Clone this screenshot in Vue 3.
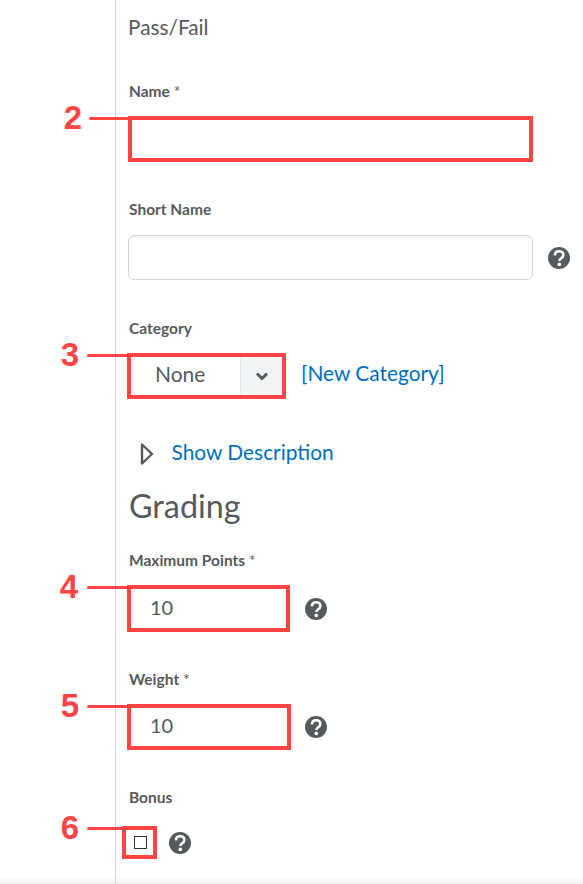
<script setup>
// question mark icon is the same everywhere, so it is drawn once and re-used with <use>
const helpIcon = '#help-icon'
</script>

<template>
  <div class="page">
    <svg class="icon-defs" width="0" height="0">
      <symbol id="help-icon" viewBox="0 0 22 22">
        <circle cx="11" cy="11" r="11" fill="#565a5c" />
        <path d="M6.9 8.4C7 5.9 8.7 4.3 11.1 4.3c2.5 0 4.2 1.5 4.2 3.7 0 1.7-.9 2.6-2.2 3.4-1.1.7-1.7 1.3-1.7 2.6" fill="none" stroke="#fff" stroke-width="2.6" />
        <circle cx="11.3" cy="17.4" r="1.8" fill="#fff" />
      </symbol>
    </svg>

    <div class="bottom-shade"></div>

    <main class="content">
      <p class="type-name">Pass/Fail</p>

      <div class="field">
        <label class="label label-name">Name <span class="req">*</span></label>
        <div class="marked">
          <input class="box box-name" type="text">
          <div class="callout callout-tight"><span class="num">2</span><span class="line line-name"></span></div>
        </div>
      </div>

      <div class="field field-short">
        <label class="label label-short">Short Name</label>
        <div class="row">
          <input class="short-input" type="text">
          <svg class="help" width="22" height="22"><use :href="helpIcon" /></svg>
        </div>
      </div>

      <div class="field field-category">
        <label class="label">Category</label>
        <div class="row row-category">
          <div class="marked">
            <div class="box box-select">
              <span class="select-value">None</span>
              <span class="select-arrow">
                <svg width="14" height="10" viewBox="0 0 14 10">
                  <path d="M2 2.5l5 5 5-5" fill="none" stroke="#565a5c" stroke-width="3" />
                </svg>
              </span>
            </div>
            <div class="callout"><span class="num">3</span><span class="line"></span></div>
          </div>
          <a class="link new-category">[New Category]</a>
        </div>
      </div>

      <div class="show-desc">
        <svg class="show-arrow" width="14" height="22" viewBox="0 0 14 22">
          <path d="M2 1.5v19L12 11z" fill="none" stroke="#565a5c" stroke-width="2.4" stroke-linejoin="round" />
        </svg>
        <a class="link">Show Description</a>
      </div>

      <h2 class="heading">Grading</h2>

      <div class="field field-first">
        <label class="label">Maximum Points <span class="req">*</span></label>
        <div class="row">
          <div class="marked">
            <input class="box box-points" type="text" value="10">
            <div class="callout callout-wide"><span class="num">4</span><span class="line"></span></div>
          </div>
          <svg class="help" width="22" height="22"><use :href="helpIcon" /></svg>
        </div>
      </div>

      <div class="field">
        <label class="label">Weight <span class="req">*</span></label>
        <div class="row row-weight">
          <div class="marked">
            <input class="box box-weight" type="text" value="10">
            <div class="callout"><span class="num">5</span><span class="line"></span></div>
          </div>
          <svg class="help" width="22" height="22"><use :href="helpIcon" /></svg>
        </div>
      </div>

      <div class="field">
        <label class="label label-bonus">Bonus</label>
        <div class="row row-bonus">
          <div class="marked marked-check">
            <div class="box box-check">
              <input class="check" type="checkbox">
            </div>
            <div class="callout"><span class="num">6</span><span class="line line-short"></span></div>
          </div>
          <svg class="help" width="22" height="22"><use :href="helpIcon" /></svg>
        </div>
      </div>
    </main>
  </div>
</template>

<style scoped>
.page {
  position: relative;
  width: 583px;
  height: 884px;
  overflow: hidden;
  background: #fff;
  font-family: Lato, "Open Sans", sans-serif;
  color: #565a5c;
}

.icon-defs {
  position: absolute;
}

.content {
  position: relative;
  box-sizing: border-box;
  height: 884px;
  margin-left: 115px;
  padding: 15px 0 0 12px;
  border-left: 1px solid #d3d6e0;
}

.type-name {
  margin: 0 0 42px;
  font-size: 20.8px;
  line-height: 24px;
}

.field {
  margin-bottom: 38px;
}

.field-short {
  margin-bottom: 39px;
}

.field-category {
  margin-bottom: 41px;
}

.field-first {
  margin-top: 27px;
}

.label {
  display: block;
  margin: 0 0 16px 1px;
  font-size: 15.5px;
  font-weight: 700;
  line-height: 18px;
}

.label-name {
  padding-top: 1px;
}

.label-short {
  margin-bottom: 17px;
}

.label-bonus {
  margin-bottom: 20px;
}

.req {
  font-weight: 400;
}

.row {
  display: flex;
  align-items: center;
  gap: 15px;
}

.row-weight {
  gap: 14px;
}

.row-bonus {
  gap: 12px;
}

.marked {
  position: relative;
}

.row .marked {
  margin-left: -1px;
}

.box {
  display: block;
  box-sizing: border-box;
  border: 4px solid #ff4444;
  border-radius: 0;
  outline: none;
  background: #fff;
  font-family: inherit;
  font-size: 20px;
  color: #565a5c;
}

.box-name {
  width: 405px;
  height: 46px;
}

.short-input {
  box-sizing: border-box;
  width: 405px;
  height: 45px;
  border: 1px solid #d3d6e0;
  border-radius: 6px;
  outline: none;
  background: #fff;
  box-shadow: inset 0 2px 0 #f4f5f8;
}

.box-select {
  display: flex;
  width: 159px;
  height: 46px;
  font-size: 21px;
}

.select-value {
  flex: 1;
  padding-left: 24px;
  line-height: 34px;
}

.select-arrow {
  display: flex;
  align-items: center;
  justify-content: center;
  width: 41px;
  background: #f1f3f5;
  border-left: 1px solid #e3e6ea;
}

.link {
  color: #006fbf;
  font-size: 20.9px;
  line-height: 24px;
}

.new-category {
  margin-bottom: 7px;
}

.show-desc {
  display: flex;
  align-items: center;
  gap: 18px;
  height: 24px;
  margin-left: 11.5px;
}

.show-arrow {
  margin-top: 3px;
}

.heading {
  margin: 24px 0 0 1px;
  font-size: 32.3px;
  font-weight: 400;
  line-height: 36px;
}

.box-points {
  width: 163px;
  height: 47px;
  padding: 0 0 4px 19px;
}

.box-weight {
  width: 164px;
  height: 46px;
  padding: 0 0 4px 19px;
}

.box-check {
  display: flex;
  align-items: center;
  justify-content: center;
  width: 35px;
  height: 33px;
  padding-left: 2px;
}

.marked-check {
  flex: none;
}

.row .marked-check {
  margin-left: -6px;
}

.check {
  appearance: none;
  box-sizing: border-box;
  width: 13px;
  height: 13px;
  margin: 0;
  border: 1px solid #333;
  background: #fff;
}

/* red numbered pointers lie over the form, on the left of each marked box */
.callout {
  position: absolute;
  top: 0;
  right: 100%;
  display: flex;
  align-items: center;
  gap: 8px;
  height: 4px;
}

.callout-tight {
  gap: 7px;
}

.callout-wide {
  gap: 9px;
}

.num {
  font-family: "Liberation Sans", Arial, sans-serif;
  font-size: 33px;
  font-weight: 700;
  line-height: 32px;
  color: #ff4444;
}

.line {
  width: 40px;
  height: 3px;
  border-radius: 2px 0 0 2px;
  background: #ff4444;
}

.line-name {
  width: 39px;
}

.line-short {
  width: 35px;
}

.bottom-shade {
  position: absolute;
  left: 0;
  right: 0;
  bottom: 0;
  height: 7px;
  background: linear-gradient(#fff, #f0f0f0);
}
</style>
